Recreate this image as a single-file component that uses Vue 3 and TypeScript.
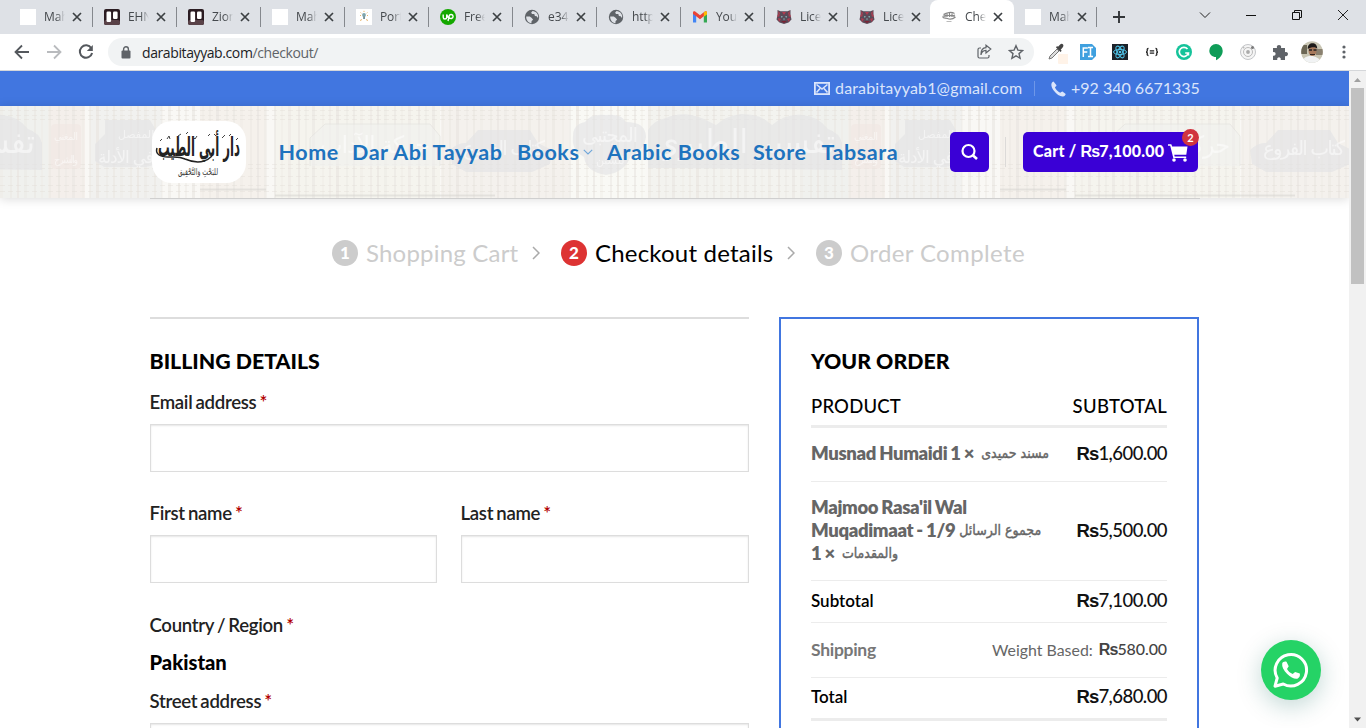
<script setup lang="ts">
interface Tab {
  title: string
  icon: string
  active?: boolean
}

const tabs: Tab[] = [
  { title: 'Mah', icon: 'blank' },
  { title: 'EHN', icon: 'trello' },
  { title: 'Zion', icon: 'trello' },
  { title: 'Mah', icon: 'blank' },
  { title: 'Port', icon: 'bulb' },
  { title: 'Free', icon: 'up' },
  { title: 'e34', icon: 'globe' },
  { title: 'http', icon: 'globe' },
  { title: 'You', icon: 'gmail' },
  { title: 'Lice', icon: 'mask' },
  { title: 'Lice', icon: 'mask' },
  { title: 'Che', icon: 'logo', active: true },
  { title: 'Mah', icon: 'blank' },
]

const nav = [
  { label: 'Home', cls: 'n1' },
  { label: 'Dar Abi Tayyab', cls: 'n2' },
  { label: 'Books', cls: 'n3', menu: true },
  { label: 'Arabic Books', cls: 'n4' },
  { label: 'Store', cls: 'n5' },
  { label: 'Tabsara', cls: 'n6' },
]

// Book spines across one 800px tile of the header backdrop
const spines = Array.from({ length: 100 }, (_, i) => ({
  x: i * 8 + ((i * 5) % 3),
  w: i % 3 === 0 ? 3 : 2,
  o: 0.3 + ((i * 7) % 5) * 0.13,
}))
const bands = [4, 9, 13, 58, 62, 70, 79, 85]
const panels = [
  { x: 0, w: 48, c: '#e3e6e4' },
  { x: 49, w: 36, c: '#ede2dd' },
  { x: 90, w: 72, c: '#e6e6e6' },
  { x: 200, w: 66, c: '#f0e5df' },
  { x: 275, w: 165, c: '#f1ede3' },
  { x: 441, w: 128, c: '#ede6e2' },
  { x: 570, w: 76, c: '#fbfaf6' },
  { x: 648, w: 152, c: '#eaeae7' },
]
</script>

<template>
  <div class="window">
    <div class="tabstrip">
      <div v-for="(t, i) in tabs" :key="i" class="tab" :class="['t' + i, { active: t.active }]">
        <span class="fav">
          <svg viewBox="0 0 16 16" width="16" height="16">
            <rect v-if="t.icon === 'blank'" width="16" height="16" fill="#fff" />
            <g v-else-if="t.icon === 'trello'">
              <rect width="16" height="16" rx="2" fill="#2b1c22" />
              <rect y="11" width="16" height="5" rx="2" fill="#5a4248" />
              <rect x="2.500" y="2.500" width="4.600" height="10.500" rx="1.200" fill="#fff" />
              <rect x="9" y="2.500" width="4.600" height="7.500" rx="1.200" fill="#fff" />
            </g>
            <g v-else-if="t.icon === 'bulb'">
              <rect width="16" height="16" fill="#fff" />
              <path d="M8 1.800v1.200M4.600 3.500l.8.800M11.400 3.500l-.8.800M4 6.500h1M11 6.500h1M4 11.500l2-1M12 11.500l-2-1" stroke="#e8b46a" stroke-width="1" />
              <circle cx="8" cy="6" r="1.900" fill="#7fa5ad" />
              <path d="M7.300 7.500h1.500v2.500H7.300z" fill="#55777d" />
            </g>
            <g v-else-if="t.icon === 'up'">
              <circle cx="8" cy="8" r="8" fill="#14a800" />
              <path d="M3.200 5.500v2.700c0 2.400 3.500 2.400 3.500 0V5.500c.8 2.200 1.600 3.600 2.800 4.300M8 12l1.200-5.200c.5-1.900 3.900-1.700 3.900.7 0 2.300-3 2.600-4 1" fill="none" stroke="#fff" stroke-width="1.400" />
            </g>
            <g v-else-if="t.icon === 'globe'">
              <circle cx="8" cy="8" r="7.200" fill="#5f6368" />
              <path d="M2.200 7.500h3.600l2 1.400 1.300 1.900-1.500 1.200-.2 2.200C4.300 14 2 11 2.200 7.500zM8.500 1.900l-1.400 1.900 1 1.300h2.200l.6 1.900 1.800.2.600 1.300h.9c.2-3.600-2-6.300-5.700-6.600z" fill="#dee1e6" />
            </g>
            <g v-else-if="t.icon === 'gmail'">
              <path d="M1 4v9.500h3.200V6z" fill="#4285f4" />
              <path d="M15 4v9.500h-3.200V6z" fill="#34a853" />
              <path d="M1 3.500C1 2.300 2.500 2 3.500 2.800L8 6.300l4.500-3.500c1-.8 2.500-.5 2.500 .7L11.800 7.300 8 10.200 4.200 7.300 1 5z" fill="#ea4335" />
              <path d="M11.800 3.400l.9-.7c1-.7 2.300-.3 2.300 1V5.500l-3.200 2.300z" fill="#fbbc04" />
            </g>
            <g v-else-if="t.icon === 'mask'">
              <path d="M1.500 1l3 1.200h7L14.500 1v5l1 4.500-3 3L8 15l-4.500-1.500-3-3L1.500 6z" fill="#5a4a58" />
              <path d="M2 2l2 2-1 3zM14 2l-2 2 1 3zM2 9l3 1-2 3zM14 9l-3 1 2 3zM6 3h4l-2 3zM1 8l3-1-2-2zM15 8l-3-1 2-2z" fill="#b33c50" />
              <path d="M5 7l2 .8-1.500 1zM11 7l-2 .8 1.500 1zM7.300 9.500h1.400l-.7 2z" fill="#8ed0cf" />
              <path d="M5 12h6l-3 2z" fill="#7c2233" />
            </g>
            <g v-else fill="none" stroke="#888">
              <path d="M1.500 7.500c1 2.500 3 1 5 2s5 1 8-1.500M2.500 5.500c3-2 8-3 11-1M4 5v3M6 4v4M8.500 4v4M11 4.500V8M13 6v2M2 7c4-2 8 1 12-1" stroke-width="1.200" />
              <path d="M5.500 12.500h5" stroke="#bbb" />
            </g>
          </svg>
        </span>
        <span class="ttl">{{ t.title }}</span>
        <svg class="x" viewBox="0 0 10 10" width="10" height="10"><path d="M1 1l8 8M9 1L1 9" stroke="#3c4043" stroke-width="1.700" /></svg>
      </div>
      <svg class="plus" viewBox="0 0 12 12" width="12" height="12"><path d="M6 0v12M0 6h12" stroke="#333639" stroke-width="1.900" /></svg>
      <div class="winctl">
        <svg viewBox="0 0 12 12" width="12" height="12"><path d="M1 3.500l5 5 5-5" fill="none" stroke="#222" /></svg>
        <svg viewBox="0 0 12 12" width="12" height="12"><path d="M1 6.500h10" stroke="#111" /></svg>
        <svg viewBox="0 0 12 12" width="12" height="12"><path d="M1.500 3.500h7v7h-7zM3.500 3.500v-2h7v7h-2" fill="none" stroke="#111" /></svg>
        <svg viewBox="0 0 12 12" width="12" height="12"><path d="M1 1l10 10M11 1L1 11" stroke="#222" /></svg>
      </div>
    </div>

    <div class="toolbar">
      <svg class="tb" viewBox="0 0 16 16" width="16" height="16"><path d="M15 8H2M8 1.500L1.500 8 8 14.500" fill="none" stroke="#54585d" stroke-width="1.800" /></svg>
      <svg class="tb" viewBox="0 0 16 16" width="16" height="16"><path d="M1 8h13M8 1.500L14.500 8 8 14.500" fill="none" stroke="#b9bbbe" stroke-width="1.800" /></svg>
      <svg class="tb" viewBox="0 0 16 16" width="16" height="16"><path d="M13.300 4.200A6.200 6.200 0 1 0 14.100 9" fill="none" stroke="#54585d" stroke-width="2" /><path d="M14.800 1v6H8.800z" fill="#54585d" /></svg>
      <div class="omnibox">
        <svg class="lock" viewBox="0 0 10 13" width="10" height="13"><rect x=".5" y="4.500" width="9" height="8" rx="1" fill="#5f6368" /><path d="M2.600 5V3.200a2.400 2.400 0 0 1 4.800 0V5" fill="none" stroke="#5f6368" stroke-width="1.400" /></svg>
        <span class="url">darabitayyab.com<i>/checkout/</i></span>
        <svg class="share" viewBox="0 0 16 16" width="16" height="16"><path d="M5 4H3.500Q2 4 2 5.500v7Q2 14 3.500 14h8q1.500 0 1.500-1.500V11M5 11c.3-3 2-4.500 5-4.700V9l4.800-4-4.800-3.800v2.500C6.500 4 4.800 7 5 11z" fill="none" stroke="#5f6368" stroke-width="1.200" /></svg>
        <svg class="star" viewBox="0 0 16 16" width="16" height="16"><path d="M8 1.700l1.900 4.400 4.700.4-3.600 3.100 1.100 4.700L8 11.800l-4.100 2.500L5 9.600 1.400 6.500l4.700-.4z" fill="none" stroke="#5f6368" stroke-width="1.400" /></svg>
      </div>
      <div class="exts">
        <svg viewBox="0 0 24 24" width="24" height="24"><rect x="14" y="14" width="12" height="10" rx="1" fill="#fff3e8" /><path d="M5 19l1-3 7-7 2 2-7 7-3 1" fill="#ddd" stroke="#777" stroke-width="1" /><path d="M12 7.500l4.500 4.500 1.200-1.200-1-1 2.300-2.800c1.500-2-1-4.200-2.800-2.600L14 6.700l-1-.6z" fill="#444" /></svg>
        <svg viewBox="0 0 24 24" width="24" height="24"><path d="M4 4h12l4 4v8l-4 4H4z" fill="#3fa0df" /><path d="M7.300 17V8h4.500M7.300 12h4M12 7.500h5M12 16.500h5M14.500 7.500v9" stroke="#fff" stroke-width="1.500" fill="none" /></svg>
        <svg viewBox="0 0 24 24" width="24" height="24"><rect x="4" y="4" width="16" height="16" fill="#1c2229" /><g fill="none" stroke="#4fc3e8"><ellipse cx="12" cy="12" rx="6.500" ry="2.600" /><ellipse cx="12" cy="12" rx="6.500" ry="2.600" transform="rotate(60 12 12)" /><ellipse cx="12" cy="12" rx="6.500" ry="2.600" transform="rotate(120 12 12)" /></g><circle cx="12" cy="12" r="1.300" fill="#4fc3e8" /></svg>
        <svg viewBox="0 0 24 24" width="24" height="24"><path d="M8.500 8.500c-2 0-1 1.500-1.300 2.500-.1.600-.5.900-1.100 1 .6.100 1 .4 1.100 1 .3 1-.7 2.500 1.300 2.500M15.500 8.500c2 0 1 1.500 1.300 2.500.1.600.5.900 1.100 1-.6.100-1 .4-1.100 1-.3 1 .7 2.500-1.300 2.500M9.800 10.800h4.400M9.800 13.200h4.400" fill="none" stroke="#222" stroke-width="1.300" /></svg>
        <svg viewBox="0 0 24 24" width="24" height="24"><circle cx="12" cy="12" r="8" fill="#15c39a" /><path d="M15.500 9A4.600 4.600 0 1 0 16.400 13h-3.200M16.400 13v2.600" fill="none" stroke="#fff" stroke-width="1.700" /></svg>
        <svg viewBox="0 0 24 24" width="24" height="24"><path d="M12 4a6.700 6.700 0 0 0-6.700 6.700c0 3.600 2.900 6.300 6.700 6.300v3.200c4-2 6.700-5.500 6.700-9.500A6.700 6.700 0 0 0 12 4z" fill="#0f9d58" /></svg>
        <svg viewBox="0 0 24 24" width="24" height="24" fill="none" stroke="#c4c6c9"><circle cx="12" cy="12" r="7.500" fill="#f5f5f5" /><circle cx="12" cy="12" r="4.500" stroke="#bbb" /><circle cx="12" cy="12" r="1.900" fill="#aaa" stroke="none" /><circle cx="16.500" cy="7.500" r="1.500" fill="#777" stroke="none" /><circle cx="7.500" cy="7.500" r="1" fill="#bbb" stroke="none" /></svg>
        <svg viewBox="0 0 24 24" width="24" height="24"><path d="M5 8h4c-1.500-4 5.500-4 4 0h4v4.200c4-1.500 4 5.100 0 3.800V20h-4.300c1-3.600-4.400-3.600-3.400 0H5v-4.300c3.500 1 3.500-4.500 0-3.500z" fill="#5f6368" /></svg>
      </div>
      <svg class="avatar" viewBox="0 0 22 22" width="22" height="22">
        <defs><clipPath id="face"><circle cx="11" cy="11" r="10.800" /></clipPath></defs>
        <g clip-path="url(#face)">
          <rect width="22" height="22" fill="#c8c5b3" /><path d="M0 4h6v9H0z" fill="#6b6654" /><path d="M15 8h7v6h-7z" fill="#8a8170" />
          <path d="M1 22c1-6 5-7 9-7s9 2 10 7z" fill="#f1f3f4" /><ellipse cx="11.500" cy="9.500" rx="4" ry="5.500" fill="#a7795c" />
          <path d="M6.800 8C6 1 16.500 0 16.200 8c-1-2.500-6-2.500-9.400 0z" fill="#1e1b1a" /><path d="M8 9h3M12.500 9h3" stroke="#222" stroke-width="1.500" /><path d="M9 13.500h5" stroke="#33261f" />
        </g>
      </svg>
      <svg class="dots" viewBox="0 0 4 16" width="4" height="16" fill="#5f6368"><circle cx="2" cy="3" r="1.600" /><circle cx="2" cy="8" r="1.600" /><circle cx="2" cy="13" r="1.600" /></svg>
    </div>

    <div class="viewport">
      <div class="page">
        <div class="topbar">
          <svg viewBox="0 0 16 13" width="16" height="13"><rect x=".9" y=".9" width="14.200" height="11.200" fill="none" stroke="#dbe5fb" stroke-width="1.800" /><path d="M2.500 2.500L8 7l5.500-4.500M2.500 10.500L6 6.500M13.500 10.500L10 6.500" fill="none" stroke="#dbe5fb" stroke-width="1.600" /></svg>
          <span class="mail">darabitayyab1@gmail.com</span>
          <i class="vr"></i>
          <svg viewBox="0 0 16 16" width="16" height="16"><path d="M3.500.5c-3 1.200-2.800 5 .2 9 3.300 4.300 7.500 6.900 10.200 5.800 1-.5 1.600-1.200 1.800-2.300l-3.200-2.600c-1 .2-1.600.8-2.300 1.400C8 10.800 5.800 8.500 4.900 6.200c.7-.5 1.300-1 1.600-2z" fill="#dbe5fb" /></svg>
          <span class="tel">+92 340 6671335</span>
        </div>

        <header class="header">
          <svg class="books" width="1349" height="92" aria-hidden="true">
            <defs>
              <pattern id="shelf" width="800" height="92" patternUnits="userSpaceOnUse">
                <rect width="800" height="92" fill="#f9f8f5" />
                <rect v-for="p in panels" :key="p.x" :x="p.x" y="0" :width="p.w" height="92" :fill="p.c" opacity=".4" />
                <rect v-for="s in spines" :key="s.x" :x="s.x" y="0" :width="s.w" height="92" fill="#ebe8e3" :opacity="s.o" />
                <path v-for="b in bands" :key="b" :d="`M0 ${b}.500H800`" stroke="#e2ddd6" stroke-dasharray="5 3" opacity=".45" />
                <path d="M275 89.500h220M200 83.500h66" stroke="#d4d2ce" stroke-width="2" opacity=".5" />
                <g fill="#e4e4e5" opacity=".65">
                  <path d="M105 14h45l6 10 2 34-12 3H104l-9-6V38l10-10z" />
                  <path d="M450 44q8-8 16-7l12-13h52l8 13 14 7-2 14-18 8h-66l-14-8z" />
                  <path d="M573 30q0-12 12-14 6-9 21-7 15-2 20 7 20 0 20 15-2 14-15 18-5 17-25 20-20-3-22-18-13-7-11-21z" />
                  <path v-for="dx in [0, -800]" :key="dx" :transform="`translate(${dx})`" d="M648 62V24q6-10 18-12 18-8 38 1 8 4 12 6 10-9 24-11 20-1 32 11 14-12 30-10 16 1 26 14 12 4 14 14v27z" />
                </g>
                <rect x="51" y="18" width="30" height="45" rx="4" fill="#f0e5e1" opacity=".5" />
                <path d="M310 60V32l15-14h105l10 12v30" fill="#f0f0ef" stroke="#e0dfdb" opacity=".6" />
                <g class="spine-text">
                  <text x="118" y="32" font-size="11">المفصل</text>
                  <text x="98" y="57" font-size="17" textLength="56">في الأدلة</text>
                  <text x="54" y="34" font-size="10" textLength="24">المغني</text>
                  <text x="54" y="57" font-size="10" textLength="24">والشرح</text>
                  <text x="320" y="47" font-size="24" textLength="110">حركة الآداب</text>
                  <text x="463" y="49" font-size="20" textLength="82">كتاب الفروع</text>
                  <text x="582" y="36" font-size="20" textLength="56">المجتبى</text>
                  <text x="596" y="58" font-size="11">للسنن</text>
                  <text v-for="dx in [0, -800]" :key="dx" :x="655 + dx" y="47" font-size="33" textLength="180" lengthAdjust="spacingAndGlyphs">تفسير الطبري</text>
                </g>
              </pattern>
            </defs>
            <rect width="1349" height="92" fill="url(#shelf)" />
          </svg>
          <div class="bar">
            <svg class="logo" viewBox="0 0 94 62" width="94" height="62">
              <rect width="94" height="62" rx="20" fill="#fff" />
              <text class="calli" x="6" y="35" textLength="82" lengthAdjust="spacingAndGlyphs">دار أبي الطيب</text>
              <path d="M5 27c-2 6 3 9 11 9 7 0 11-1 17 2 7 3 13 4 19 2 4-1 6-3 8-5" fill="none" stroke="#222" stroke-width="1.500" />
              <path d="M8 20l2-2M15 18l2-3 1 3M26 15l3-2M34 13l2-2M41 16l2 2 2-3M56 15l2-2M62 13l2 2M70 17l3-3M77 15l2-2M84 19l2-2" fill="none" stroke="#444" stroke-width="1" />
              <text class="sub" x="26" y="54" textLength="40" lengthAdjust="spacingAndGlyphs">للبَحْثِ وَالتَّحْقِيق</text>
            </svg>
            <nav>
              <a v-for="n in nav" :key="n.label"><span :class="n.cls">{{ n.label }}</span><svg v-if="n.menu" viewBox="0 0 10 6" width="10" height="6"><path d="M.8.8L5 5 9.200.8" fill="none" stroke="#6fa6d9" stroke-width="1.100" /></svg></a>
            </nav>
            <button class="search"><svg viewBox="0 0 18 18" width="18" height="18"><circle cx="7.500" cy="8" r="6" fill="none" stroke="#fff" stroke-width="2.200" /><path d="M11.500 12l4.500 4" stroke="#fff" stroke-width="2.600" /></svg></button>
            <i class="vr dark"></i>
            <div class="cart">
              <span>Cart / <b>Rs</b>7,100.00</span>
              <svg viewBox="0 0 20 19" width="20" height="19"><path d="M0 1.200h3.300l.9 2.300h15.300l-1.200 8.200H6.200l.5 1.800h11.500v1.600H5.300L2.200 2.800H0z" fill="#fff" /><circle cx="6" cy="17" r="1.800" fill="#fff" /><circle cx="17" cy="17" r="1.800" fill="#fff" /></svg>
              <em>2</em>
            </div>
          </div>
        </header>

        <div class="steps">
          <i>1</i><span class="s1">Shopping Cart</span>
          <svg viewBox="0 0 8 14" width="8" height="14"><path d="M1 1l6 6-6 6" fill="none" stroke="#aaa" stroke-width="1.500" /></svg>
          <i class="on">2</i><span class="s2 on">Checkout details</span>
          <svg viewBox="0 0 8 14" width="8" height="14"><path d="M1 1l6 6-6 6" fill="none" stroke="#aaa" stroke-width="1.500" /></svg>
          <i>3</i><span class="s3">Order Complete</span>
        </div>

        <main class="cols">
          <section class="billing">
            <h3><span>BILLING DETAILS</span></h3>
            <label>Email address <b>*</b></label>
            <div class="input"></div>
            <div class="pair">
              <div><label>First name <b>*</b></label><div class="input"></div></div>
              <div><label>Last name <b>*</b></label><div class="input"></div></div>
            </div>
            <label class="country">Country / Region <b>*</b></label>
            <strong>Pakistan</strong>
            <label class="street">Street address <b>*</b></label>
            <div class="input"></div>
          </section>

          <section class="order">
            <h3><span>YOUR ORDER</span></h3>
            <div class="row head"><span>PRODUCT</span><span class="s">SUBTOTAL</span></div>
            <div class="row r1">
              <div class="name"><div><span>Musnad Humaidi 1 ×</span><span class="ar">مسند حمیدی</span></div></div>
              <span class="amt"><b>Rs</b>1,600.00</span>
            </div>
            <div class="row r2">
              <div class="name">
                <div><span>Majmoo Rasa'il Wal</span></div>
                <div><span>Muqadimaat - 1/9</span><span class="ar near">مجموع الرسائل</span></div>
                <div><span>1 ×</span><span class="ar">والمقدمات</span></div>
              </div>
              <span class="amt"><b>Rs</b>5,500.00</span>
            </div>
            <div class="row r3"><span class="t">Subtotal</span><span class="amt"><b>Rs</b>7,100.00</span></div>
            <div class="row r4"><span class="ship">Shipping</span><span class="wb">Weight Based:</span><span class="amt small"><b>Rs</b>580.00</span></div>
            <div class="row r5"><span class="t">Total</span><span class="amt"><b>Rs</b>7,680.00</span></div>
          </section>
        </main>

        <div class="wa">
          <svg viewBox="0 0 36 36" width="36" height="36">
            <path d="M2 34.200L4.200 26A15.700 15.700 0 1 1 10.300 32z" fill="none" stroke="#fff" stroke-width="3" stroke-linejoin="round" />
            <path d="M9.200 11.500c.5-1.600 2.300-2.300 4.300-1.800l2.200 4.600-1.700 2.600c1.200 2.300 3 4 5.700 5l2.400-2 4.700 1.700c.6 2-.4 4-2 5-3 .8-7-1-10.600-4.600-3.700-3.700-5.500-7.500-5-10.500z" fill="#fff" />
          </svg>
        </div>
      </div>
      <div class="scroll">
        <svg viewBox="0 0 17 17" width="17" height="17"><path d="M5 11l3.500-4 3.500 4z" fill="#a0a0a0" /></svg>
        <div class="thumb"></div>
        <svg class="down" viewBox="0 0 17 17" width="17" height="17"><path d="M5 6.500l3.500 4 3.500-4z" fill="#505050" /></svg>
      </div>
    </div>
  </div>
</template>

<style>
html, body { margin: 0; overflow: hidden; background: #fff; }
</style>

<style scoped>
* { box-sizing: border-box; }
svg { display: block; flex: none; }
.window { width: 1366px; height: 728px; display: flex; flex-direction: column; overflow: hidden; font-family: Lato, sans-serif; color: #000; white-space: nowrap; }
.tabstrip { height: 34px; flex: none; background: #dee1e6; display: flex; align-items: center; padding-left: 8px; font: 12px "Open Sans", sans-serif; color: #45494d; }
.tab { width: 84px; height: 34px; display: flex; align-items: center; padding-left: 11px; flex: none; background: linear-gradient(#85888d, #85888d) right center / 1px 20px no-repeat; }
.t0 { width: 85px; padding-left: 12px; }
.t9 { width: 83px; }
.t10 { width: 82px; background-image: none; }
.t12 { width: 83px; }
.tab.active { background: #fff; border-radius: 8px 8px 0 0; }
.fav { width: 16px; flex: none; }
.ttl { width: 21px; margin-left: 8px; line-height: 18px; letter-spacing: -.1px; -webkit-mask-image: linear-gradient(90deg, #000 60%, transparent); mask-image: linear-gradient(90deg, #000 60%, transparent); }
.x { margin-left: 7px; }
.plus { margin-left: 16px; }
.winctl { margin-left: auto; display: flex; gap: 34px; padding: 0 17px 5px 0; }
.toolbar { height: 37px; flex: none; background: #fff; border-bottom: 1px solid #d5d7da; display: flex; align-items: center; padding-left: 14px; }
.tb { margin-right: 16px; }
.omnibox { width: 926px; height: 28px; margin-left: -2px; border-radius: 14px; background: #f1f3f4; display: flex; align-items: center; padding: 0 10px 0 13px; }
.url { margin-left: 11px; font: 14px "Open Sans", sans-serif; letter-spacing: -.4px; color: #202124; }
.url i { font-style: normal; color: #5f6368; }
.share { margin-left: auto; }
.star { margin-left: 16px; }
.exts { display: flex; gap: 8px; margin-left: 10px; }
.avatar { margin-left: 9px; }
.dots { margin-left: 19px; }
.viewport { flex: 1; display: flex; min-height: 0; }
.page { width: 1349px; overflow: hidden; position: relative; }
.scroll { width: 17px; background: #f1f1f1; display: flex; flex-direction: column; }
.thumb { width: 13px; height: 196px; margin-left: 2px; background: #c1c1c1; }
.down { margin-top: auto; }
.topbar { height: 35px; background: #4176e0; display: flex; align-items: center; justify-content: flex-end; padding-right: 150px; font-size: 16px; color: #dbe5fb; }
.mail { margin: 0 12px 2px 5px; width: 187px; letter-spacing: .17px; }
.tel { width: 128px; margin: 0 0 2px 5px; }
.vr { width: 1px; height: 15px; background: #6e97e8; margin-right: 15px; }
.vr.dark { height: 30px; background: #dcdad8; margin: 0 17px 0 16px; }
.header { height: 92px; position: relative; box-shadow: 0 1px 10px rgba(0, 0, 0, .15); }
.books { position: absolute; left: 0; top: 0; }
.spine-text { fill: #fff; font-family: "DejaVu Sans", sans-serif; opacity: .5; }
.bar { position: relative; width: 1050px; height: 93px; margin-left: 150px; border-bottom: 1px solid #cfcfcf; display: flex; align-items: center; padding-left: 2px; }
.calli { font: bold 26px "DejaVu Sans", sans-serif; fill: #222; }
.sub { font: 9px "DejaVu Sans", sans-serif; fill: #333; }
nav { display: flex; margin-left: 32.500px; gap: 14px; font-size: 21.500px; font-weight: 700; color: #1e73be; width: 671.500px; letter-spacing: .55px; }
nav a { display: flex; align-items: center; }
nav svg { margin-left: 3px; }
.n1 { width: 59.500px; } .n2 { width: 151px; } .n3 { width: 63px; } .n4 { width: 132px; } .n5 { width: 54.500px; } .n6 { width: 77px; }
.search { width: 39px; height: 40px; padding: 0; border: 0; border-radius: 5px; background: #3a00d6; display: flex; align-items: center; justify-content: center; }
.cart { width: 175px; height: 40px; border-radius: 5px; background: #3a00d6; color: #fff; font-size: 16px; font-weight: 900; display: flex; align-items: center; padding-left: 10px; position: relative; }
.cart span { width: 135px; margin-bottom: 2px; letter-spacing: .22px; }
.cart b, .amt b { font-family: "Liberation Sans", sans-serif; letter-spacing: -.9px; }
.cart em { position: absolute; right: -1px; top: -3px; width: 17px; height: 17px; border-radius: 50%; background: #d0343f; font: 700 11px/17px Lato, sans-serif; text-align: center; }
.steps { display: flex; align-items: center; height: 34px; margin: 38px 0 0 332px; font-size: 24px; color: #ccc; }
.steps i { width: 26px; height: 26px; border-radius: 50%; background: #ccc; color: #fff; font: 900 17px/26px Lato, sans-serif; text-align: center; }
.steps i.on { background: #dd3333; }
.steps span { margin: 0 0 2px 8px; letter-spacing: .2px; }
.steps .on { color: #000; }
.steps i.on { color: #fff; }
.steps svg { margin: 0 21px 0 14px; }
.s1 { width: 152px; } .s2 { width: 178px; }
.steps .s3 { letter-spacing: .37px; }
.cols { display: flex; gap: 30px; margin: 47px 0 0 150px; align-items: flex-start; }
.billing { width: 599px; border-top: 2px solid #ddd; padding-top: 28px; }
h3 { margin: 0; font-size: 21.300px; line-height: 28px; font-weight: 900; }
.billing h3, label, .billing strong { text-indent: -.5px; }
label { display: block; font-size: 18.600px; line-height: 24px; font-weight: 600; color: #222; letter-spacing: -.3px; word-spacing: -1.200px; }
label b { color: #b20000; font-weight: 600; }
h3 + label { margin-top: 15px; }
.input { height: 48px; margin-top: 10px; border: 1px solid #ddd; box-shadow: inset 0 1px 2px rgba(0, 0, 0, .1); background: #fff; }
.pair { display: grid; grid-template-columns: 287px 288px; column-gap: 24px; margin-top: 29px; }
.country { margin-top: 30px; }
.billing strong { display: block; margin-top: 11px; font-size: 20.200px; line-height: 28px; font-weight: 900; }
.street { margin-top: 13px; }
.order { width: 420px; height: 500px; border: 2px solid #4176e0; padding: 28px 30px 0; }
.row { display: flex; align-items: center; justify-content: space-between; border-bottom: 1px solid #ececec; padding-bottom: 2px; }
.head { height: 53px; border-width: 3px; font-size: 18.500px; font-weight: 500; padding: 12px 0 0; letter-spacing: .2px; }
.head .s { letter-spacing: .3px; }
.r1 { height: 54px; } .r2 { height: 99px; } .r3 { height: 42px; } .r4 { height: 55px; } .r5 { height: 43px; border-width: 3px; padding-bottom: 4px; }
.name { font-size: 18.500px; line-height: 23px; font-weight: 800; color: #666; letter-spacing: -.35px; word-spacing: -.8px; }
.name div { display: flex; }
.ar { font-family: "DejaVu Sans Condensed", "DejaVu Sans", sans-serif; font-stretch: condensed; font-size: 14px; font-weight: 400; -webkit-text-stroke: .4px #666; margin-left: 7px; direction: rtl; letter-spacing: 0; word-spacing: 0; }
.ar.near { margin-left: 4px; }
.amt { font-size: 18.500px; font-weight: 500; color: #111; letter-spacing: -.55px; }
.t { font-size: 17px; font-weight: 600; }
.ship { font-size: 17.500px; font-weight: 700; color: #777; letter-spacing: -.3px; }
.wb { margin-left: auto; margin-right: 6px; font-size: 15.900px; color: #666; }
.amt.small { font-size: 16px; color: #444; letter-spacing: -.1px; }
.wa { position: absolute; left: 1261px; top: 569px; width: 60px; height: 60px; border-radius: 50%; background: #25d366; box-shadow: 0 6px 24px rgba(7, 94, 84, .25); display: flex; align-items: center; justify-content: center; }
</style>
